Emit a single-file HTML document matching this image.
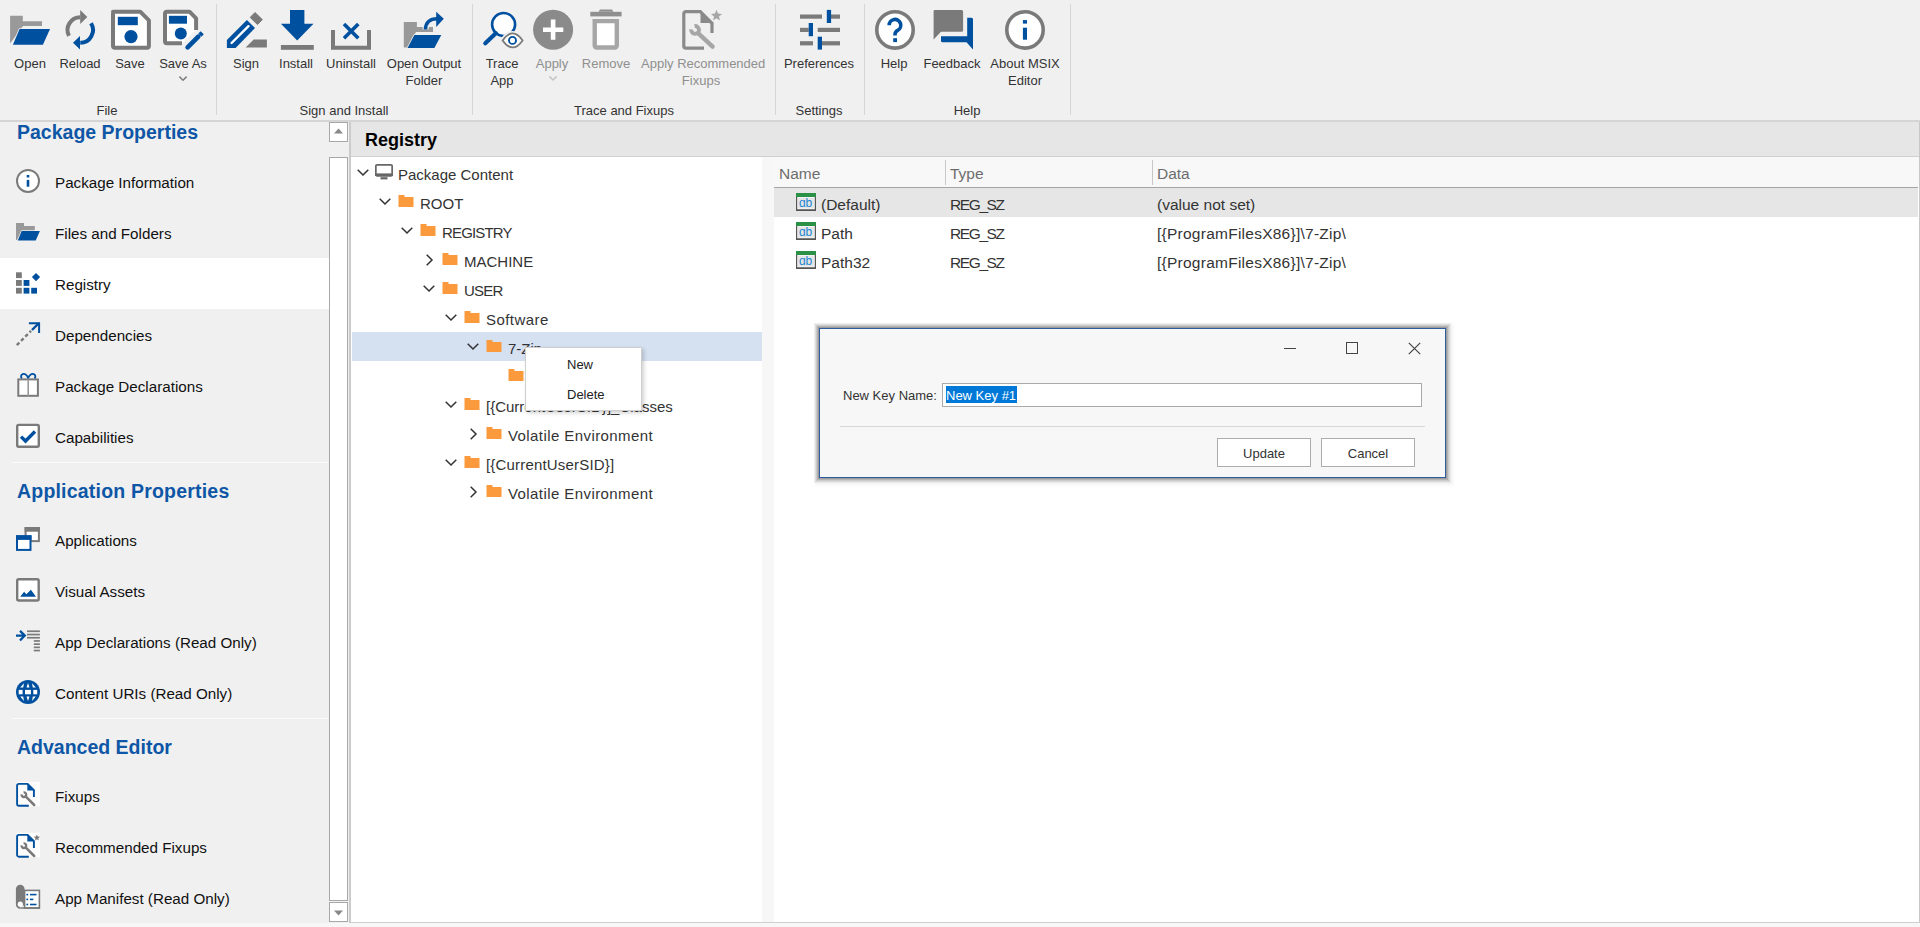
<!DOCTYPE html>
<html><head><meta charset="utf-8">
<style>
*{box-sizing:border-box;margin:0;padding:0}
html,body{width:1920px;height:927px;overflow:hidden;background:#f0f0f0;font-family:"Liberation Sans",sans-serif;color:#000}
.a{position:absolute}
.t{position:absolute;white-space:nowrap;line-height:1}
svg{position:absolute;overflow:visible}
/* ribbon */
#ribbon{left:0;top:0;width:1920px;height:120px;background:#f0f0f0}
.rl{font-size:13px;color:#333;text-align:center;width:120px;line-height:17px}
.gl{font-size:13px;color:#333;text-align:center;line-height:1;margin-top:1px}
.dis{color:#8f8f8f}
.gsep{width:1px;background:#d6d6d6;top:4px;height:111px}
/* sidebar */
.sh{font-size:19.5px;margin-top:1px;font-weight:700;color:#0e56a6}
.si{font-size:15.2px;color:#111}
/* tree */
.tr{font-size:15px;color:#333}
.lv{font-size:15.5px;color:#333}
</style></head><body>
<!-- ribbon -->
<div id="ribbon" class="a"></div>
<div class="a" style="left:0;top:120px;width:1920px;height:2px;background:#d5d5d5"></div>

<!-- group separators -->
<div class="a gsep" style="left:216px"></div>
<div class="a gsep" style="left:472px"></div>
<div class="a gsep" style="left:775px"></div>
<div class="a gsep" style="left:864px"></div>
<div class="a gsep" style="left:1070px"></div>

<!-- ribbon icons -->
<svg style="left:0;top:0" width="1100" height="60" viewBox="0 0 1100 60">
<!-- Open -->
<path d="M10.1 15.8H22.8V21.2H42V26H23L10.1 43.6Z" fill="#999"/>

<path d="M19.6 29H50L42.9 44.8H12.9Z" fill="#0050a0" stroke="#f0f0f0" stroke-width="1.6" paint-order="stroke"/>
<!-- Reload -->
<path d="M68.97 35.84A12.7 12.7 0 0 1 80.25 17.3" fill="none" stroke="#7a7a7a" stroke-width="4"/>
<path d="M80.2 10.1L87.3 17.1L80.2 24.1Z" fill="#7a7a7a"/>
<path d="M91.02 23.27A12.7 12.7 0 0 1 80.25 42.7" fill="none" stroke="#0050a0" stroke-width="4"/>
<path d="M80 36L73 42.8L80 49.5Z" fill="#0050a0"/>
<!-- Save -->
<path d="M113 11.7H140.2L148.9 20.3V45.8A2 2 0 0 1 146.9 47.8H115A2 2 0 0 1 113 45.8V13.7A2 2 0 0 1 115 11.7Z" fill="#fff" stroke="#7a7a7a" stroke-width="4" stroke-linejoin="round"/>
<rect x="117.8" y="16.8" width="20" height="8.4" fill="#0050a0"/>
<circle cx="131" cy="36.6" r="6.6" fill="#0050a0"/>
<!-- Save As -->
<path d="M182 43.3H167A2 2 0 0 1 165 41.3V13.7A2 2 0 0 1 167 11.7H189.5L196.1 18.3V30" fill="#fff" stroke="#7a7a7a" stroke-width="4" stroke-linejoin="round"/>
<rect x="168.9" y="15.8" width="18.1" height="7.9" fill="#0050a0"/>
<circle cx="180.8" cy="33.4" r="6" fill="#0050a0"/>
<path d="M184.5 50.5L203.5 31.5" stroke="#f0f0f0" stroke-width="9"/>
<path d="M187.6 47.4L198.3 36.7" stroke="#0050a0" stroke-width="4.6" stroke-linecap="round"/>
<path d="M198.3 36.7L198.5 36.5" stroke="#0050a0" stroke-width="4.6"/>
<path d="M199.9 35.1L202.2 32.8" stroke="#0050a0" stroke-width="4.4"/>
<!-- Save As chevron -->
<path d="M179.4 76.6L183 80.2L186.6 76.6" fill="none" stroke="#7f7f7f" stroke-width="1.5"/>
<!-- Sign -->
<path d="M226.9 40L246.9 20L255 28.1L235.6 48.1H226.9Z" fill="#0050a0"/>
<path d="M231.6 43L248.5 26.2" stroke="#fff" stroke-width="2.4" stroke-linecap="round"/>
<path d="M255 12.5L262.3 19.6L257.5 24.6L250.2 17.4Z" fill="#7a7a7a" stroke="#7a7a7a" stroke-width="1" stroke-linejoin="round"/>
<path d="M253.7 39.4H266.9V47.5H245.6Z" fill="#7a7a7a"/>
<!-- Install -->
<rect x="290" y="10" width="14.4" height="14" fill="#0050a0"/>
<path d="M280.9 23.7H313.5L297.2 40.6Z" fill="#0050a0"/>
<rect x="280.9" y="45" width="32.9" height="4.8" fill="#7a7a7a"/>
<!-- Uninstall -->
<path d="M333 30V47.8H369V30" fill="none" stroke="#7a7a7a" stroke-width="4"/>
<path d="M344 24L358.3 38.3M358.3 24L344 38.3" stroke="#0050a0" stroke-width="3.6"/>
<!-- Open Output Folder -->
<path d="M403.8 21.9H416.9V26.9H433V32H416L407.5 47.5H403.8Z" fill="#999"/>
<path d="M414.4 35H441.3L434.4 48.1H407.5Z" fill="#0050a0" stroke="#f0f0f0" stroke-width="1.6" paint-order="stroke"/>
<path d="M425.5 29.5C425.5 22.5 430 18.8 437 18.8" fill="none" stroke="#f0f0f0" stroke-width="6"/>
<path d="M425.5 29.5C425.5 22.5 430 18.8 437 18.8" fill="none" stroke="#0050a0" stroke-width="3.6"/>
<path d="M436.2 11.8L443.8 18.8L436.2 26.9Z" fill="#0050a0"/>
<!-- Trace App -->
<circle cx="503.6" cy="24.5" r="11.5" fill="#fff" stroke="#0050a0" stroke-width="2.6"/>
<path d="M495.8 33.2L485.3 43.3" stroke="#0050a0" stroke-width="4.2" stroke-linecap="round"/>
<path d="M502.6 40.4Q512.6 26.4 522.6 40.4Q512.6 54.4 502.6 40.4Z" fill="#fff" stroke="#f0f0f0" stroke-width="5"/>
<path d="M502.6 40.4Q512.6 26.4 522.6 40.4Q512.6 54.4 502.6 40.4Z" fill="#fff" stroke="#7a7a7a" stroke-width="1.8"/>
<circle cx="512.5" cy="40.4" r="3.5" fill="#fff" stroke="#0050a0" stroke-width="1.9"/>
<!-- Apply -->
<circle cx="553.1" cy="29.7" r="20" fill="#8a8a8a"/>
<path d="M543 29.7H563.3M553.1 19.5V39.8" stroke="#fff" stroke-width="4.6"/>
<path d="M549.4 76.4L553 80L556.6 76.4" fill="none" stroke="#c4c4c4" stroke-width="1.5"/>
<!-- Remove -->
<path d="M590.3 11.8H621.6V16.4H590.3Z" fill="#8f8f8f"/>
<path d="M600 9.6H612L613.5 11.8H598.5Z" fill="#8f8f8f"/>
<path d="M594.7 21.1H616.8V45.5A2 2 0 0 1 614.8 47.5H596.7A2 2 0 0 1 594.7 45.5Z" fill="#fff" stroke="#a6a6a6" stroke-width="4.4"/>
<!-- Apply Recommended Fixups -->
<path d="M704 48.2H686A2.2 2.2 0 0 1 683.8 46V13.8A2.2 2.2 0 0 1 686 11.6H700.3L712 23.3V33.1" fill="none" stroke="#8a8a8a" stroke-width="3.2"/>
<path d="M700.5 10.2V22.9H713.8Z" fill="#8a8a8a"/>
<path d="M694.56 26.04A3.9 3.9 0 1 1 691.24 29.36" fill="none" stroke="#a6a6a6" stroke-width="3.9"/><path d="M698.6 33.6L712.6 46.6" stroke="#a6a6a6" stroke-width="4.4" stroke-linecap="round"/>
<path d="M716.50 9.80L718.03 13.60L722.11 13.88L718.97 16.50L719.97 20.47L716.50 18.30L713.03 20.47L714.03 16.50L710.89 13.88L714.97 13.60Z" fill="#a6a6a6"/>
<!-- Preferences -->
<g fill="#7a7a7a">
<rect x="800" y="14.5" width="22" height="4.2"/><rect x="831" y="14.5" width="9" height="4.2"/>
<rect x="800" y="27.8" width="8.7" height="4.2"/><rect x="817.7" y="27.8" width="22.3" height="4.2"/>
<rect x="800" y="41.2" width="13" height="4.2"/><rect x="822" y="41.2" width="18" height="4.2"/>
</g>
<g fill="#0050a0">
<rect x="826.8" y="9.9" width="4.3" height="13.1"/>
<rect x="808.7" y="23" width="4.3" height="13.2"/>
<rect x="817.7" y="36.7" width="4.3" height="12.9"/>
</g>
<!-- Help -->
<circle cx="895" cy="29.9" r="18.2" fill="#fff" stroke="#7a7a7a" stroke-width="3.6"/>
<path d="M889.2 25.2A5.8 5.8 0 1 1 897.7 30.3C896 31.2 895 32.3 895 34.5V35.5" fill="none" stroke="#0050a0" stroke-width="3.6"/>
<rect x="893.2" y="38.2" width="3.8" height="3.9" fill="#0050a0"/>
<!-- Feedback -->
<path d="M934.4 9.9H961.6A1.5 1.5 0 0 1 963.1 11.4V30.3A1.5 1.5 0 0 1 961.6 31.8H941L933.6 39.4V11.4A1.5 1.5 0 0 1 934.4 9.9Z" fill="#7a7a7a"/>
<path d="M967.2 17.8H971.5A1.5 1.5 0 0 1 973 19.3V49.6L966.5 42.3H942.5A1.5 1.5 0 0 1 941 40.8V36.2H967.2Z" fill="#0050a0"/>
<!-- About -->
<circle cx="1025" cy="29.9" r="18.2" fill="#fff" stroke="#7a7a7a" stroke-width="3.6"/>
<rect x="1022.9" y="20.1" width="4.1" height="3.5" fill="#0050a0"/>
<rect x="1022.9" y="27.7" width="4.1" height="12" fill="#0050a0"/>
</svg>

<!-- ribbon labels -->
<div class="t rl" style="left:-30px;top:55px">Open</div>
<div class="t rl" style="left:20px;top:55px">Reload</div>
<div class="t rl" style="left:70px;top:55px">Save</div>
<div class="t rl" style="left:123px;top:55px">Save As</div>
<div class="t rl" style="left:186px;top:55px">Sign</div>
<div class="t rl" style="left:236px;top:55px">Install</div>
<div class="t rl" style="left:291px;top:55px">Uninstall</div>
<div class="t rl" style="left:364px;top:55px">Open Output<br>Folder</div>
<div class="t rl" style="left:442px;top:55px">Trace<br>App</div>
<div class="t rl dis" style="left:492px;top:55px">Apply</div>
<div class="t rl dis" style="left:546px;top:55px">Remove</div>
<div class="t rl dis" style="left:641px;top:55px;width:120px">Apply Recommended<br>Fixups</div>
<div class="t rl" style="left:759px;top:55px">Preferences</div>
<div class="t rl" style="left:834px;top:55px">Help</div>
<div class="t rl" style="left:892px;top:55px">Feedback</div>
<div class="t rl" style="left:965px;top:55px">About MSIX<br>Editor</div>

<div class="t gl" style="left:47px;top:103px;width:120px">File</div>
<div class="t gl" style="left:284px;top:103px;width:120px">Sign and Install</div>
<div class="t gl" style="left:564px;top:103px;width:120px">Trace and Fixups</div>
<div class="t gl" style="left:759px;top:103px;width:120px">Settings</div>
<div class="t gl" style="left:907px;top:103px;width:120px">Help</div>

<!-- sidebar -->
<div class="a" style="left:0;top:122px;width:329px;height:801px;background:#f0f0f0"></div>
<div class="a" style="left:0;top:258px;width:329px;height:51px;background:#fff"></div>
<div class="a" style="left:12px;top:462px;width:316px;height:1px;background:#fbfbfb"></div>
<div class="a" style="left:12px;top:718px;width:316px;height:1px;background:#fbfbfb"></div>

<div class="t sh" style="left:17px;top:122px">Package Properties</div>
<div class="t si" style="left:55px;top:175px">Package Information</div>
<div class="t si" style="left:55px;top:226px">Files and Folders</div>
<div class="t si" style="left:55px;top:277px">Registry</div>
<div class="t si" style="left:55px;top:328px">Dependencies</div>
<div class="t si" style="left:55px;top:379px">Package Declarations</div>
<div class="t si" style="left:55px;top:430px">Capabilities</div>
<div class="t sh" style="left:17px;top:481px;letter-spacing:0.2px">Application Properties</div>
<div class="t si" style="left:55px;top:533px">Applications</div>
<div class="t si" style="left:55px;top:584px">Visual Assets</div>
<div class="t si" style="left:55px;top:635px">App Declarations (Read Only)</div>
<div class="t si" style="left:55px;top:686px">Content URIs (Read Only)</div>
<div class="t sh" style="left:17px;top:737px">Advanced Editor</div>
<div class="t si" style="left:55px;top:789px">Fixups</div>
<div class="t si" style="left:55px;top:840px">Recommended Fixups</div>
<div class="t si" style="left:55px;top:891px">App Manifest (Read Only)</div>

<svg style="left:0;top:0" width="50" height="927" viewBox="0 0 50 927">
<!-- Package Information -->
<circle cx="28" cy="180.9" r="11" fill="#fff" stroke="#7a7a7a" stroke-width="2"/>
<rect x="26.7" y="175" width="2.6" height="2.5" fill="#0050a0"/>
<rect x="26.7" y="179.9" width="2.6" height="6.8" fill="#0050a0"/>
<!-- Files and Folders -->
<path d="M16 223.1H24V226H34.8V231H21.5L17 240H16Z" fill="#999"/>
<path d="M21.65 230.9H39.9L35.7 240.6H17.8Z" fill="#0050a0" stroke="#f0f0f0" stroke-width="1.2" paint-order="stroke"/>
<!-- Registry -->
<g fill="#7a7a7a"><rect x="16" y="272.3" width="5.8" height="5.8"/><rect x="16" y="280" width="5.8" height="5.9"/><rect x="16" y="287.8" width="5.8" height="5.8"/></g>
<g fill="#0050a0"><rect x="23.6" y="280" width="5.8" height="5.9"/><rect x="23.6" y="287.8" width="5.8" height="5.8"/><rect x="31.2" y="287.8" width="5.8" height="5.8"/>
<path d="M36 273L40.1 277.1L36 281.2L31.9 277.1Z"/></g>
<!-- Dependencies -->
<path d="M16.8 345.1L31 330.9" stroke="#7a7a7a" stroke-width="2.4" stroke-dasharray="3.6 2.4"/>
<path d="M32 330L39 323" stroke="#0050a0" stroke-width="2.4"/>
<path d="M28.9 323.2H39.1V333" fill="none" stroke="#0050a0" stroke-width="2"/>
<!-- Package Declarations -->
<rect x="18.3" y="379.4" width="19.6" height="16.4" fill="#fff" stroke="#7a7a7a" stroke-width="2"/>
<rect x="27.4" y="379.4" width="1.6" height="16.4" fill="#9a9a9a"/>
<path d="M28.2 378.3C27 374.5 24.5 373.5 22.7 374.1C20.7 374.8 20.5 377.2 22 378.3M28.2 378.3C29.4 374.5 31.9 373.5 33.7 374.1C35.7 374.8 35.9 377.2 34.4 378.3" fill="none" stroke="#0050a0" stroke-width="1.8"/>
<!-- Capabilities -->
<rect x="17.2" y="424.9" width="21.6" height="21.9" rx="1.5" fill="#fff" stroke="#7a7a7a" stroke-width="2.4"/>
<path d="M21 436.6L25.5 441L35 431.5" fill="none" stroke="#0050a0" stroke-width="3.4"/>
<!-- Applications -->
<rect x="25.6" y="528" width="13.3" height="13.1" fill="#fff" stroke="#7a7a7a" stroke-width="2"/>
<rect x="24.6" y="527" width="15.3" height="4.7" fill="#7a7a7a"/>
<rect x="17" y="536.3" width="13.5" height="13.6" fill="#fff" stroke="#0050a0" stroke-width="2"/>
<rect x="16" y="535.3" width="15.5" height="4.6" fill="#0050a0"/>
<!-- Visual Assets -->
<rect x="17.2" y="579.2" width="21.5" height="21.3" rx="1.5" fill="#fff" stroke="#7a7a7a" stroke-width="2.4"/>
<path d="M20.2 596.7L24.1 591.8L26.3 594.3L30.9 589.7L36 596.7Z" fill="#0050a0"/>
<!-- App Declarations -->
<path d="M16 635.6H25M20 630.9L24.8 635.6L20 640.5" fill="none" stroke="#0050a0" stroke-width="2.3"/>
<g fill="#7a7a7a"><rect x="27" y="630.4" width="12.9" height="1.7"/><rect x="27" y="633.7" width="12.9" height="1.7"/><rect x="27" y="636.9" width="12.9" height="1.7"/>
<rect x="33.8" y="640.1" width="6.1" height="1.7"/><rect x="33.8" y="643.3" width="6.1" height="1.7"/><rect x="33.8" y="646.5" width="6.1" height="1.7"/><rect x="33.8" y="649.7" width="6.1" height="1.7"/></g>
<!-- Content URIs -->
<circle cx="28" cy="691.9" r="12" fill="#0050a0"/>
<g fill="#fff">
<rect x="18.7" y="689.9" width="3.9" height="4.4"/><rect x="25" y="689.9" width="5.9" height="4.4"/><rect x="33.3" y="689.9" width="3.9" height="4.4"/>
<path d="M20.2 687.6L24 683.2L23.2 687.6Z"/><path d="M26.5 687.6L28 683L29.5 687.6Z"/><path d="M35.8 687.6L32 683.2L32.8 687.6Z"/>
<path d="M20.2 696.6L24 701L23.2 696.6Z"/><path d="M26.5 696.6L28 701L29.5 696.6Z"/><path d="M35.8 696.6L32 701L32.8 696.6Z"/>
</g>
<!-- Fixups -->
<rect x="16.5" y="781.8" width="23.5" height="24.5" fill="#fdfdfd"/>
<path d="M28.8 805.7H18.9A1.8 1.8 0 0 1 17.1 803.9V785.7A1.8 1.8 0 0 1 18.9 783.9H27.6L33.9 790.2V796.9" fill="none" stroke="#0050a0" stroke-width="1.9"/>
<path d="M27.3 783V790.6H34.8Z" fill="#0050a0"/>
<path d="M23.58 792.42A2.3 2.3 0 1 1 21.62 794.38" fill="none" stroke="#7a7a7a" stroke-width="2.3"/><path d="M25.6 796.4L34.2 805" stroke="#7a7a7a" stroke-width="2.5" stroke-linecap="round"/>
<!-- Recommended Fixups -->
<rect x="16.5" y="832.8" width="23.5" height="24.5" fill="#fdfdfd"/>
<path d="M28.8 856.7H18.9A1.8 1.8 0 0 1 17.1 854.9V836.7A1.8 1.8 0 0 1 18.9 834.9H27.6L33.9 841.2V847.9" fill="none" stroke="#0050a0" stroke-width="1.9"/>
<path d="M27.3 834V841.6H34.8Z" fill="#0050a0"/>
<path d="M23.58 843.42A2.3 2.3 0 1 1 21.62 845.38" fill="none" stroke="#7a7a7a" stroke-width="2.3"/><path d="M25.6 847.4L34.2 856" stroke="#7a7a7a" stroke-width="2.5" stroke-linecap="round"/>
<path d="M36.90 834.40L37.78 836.59L40.13 836.75L38.33 838.26L38.90 840.55L36.90 839.30L34.90 840.55L35.47 838.26L33.67 836.75L36.02 836.59Z" fill="#7a7a7a"/>
<!-- App Manifest -->
<rect x="24.6" y="890.4" width="14.8" height="17.6" fill="#fff" stroke="#7a7a7a" stroke-width="1.6"/>
<path d="M15.9 889A4.35 4.35 0 0 1 24.6 889V905L22 906H20.2A4.3 4.3 0 0 0 20.2 908.8H24.6V908.8H20.2A4.3 4.3 0 0 1 15.9 904.5Z" fill="#7a7a7a"/>
<path d="M20.2 908.8A4.3 4.3 0 0 1 15.9 904.5L15.9 904.5A4.3 4.3 0 0 0 20.2 908.8H40V907.2H20.2Z" fill="#7a7a7a"/>
<circle cx="20.3" cy="904.2" r="2.6" fill="#fff"/>
<g fill="#0050a0"><rect x="26.4" y="893.8" width="1.8" height="1.6"/><rect x="26.4" y="898.6" width="1.8" height="1.6"/><rect x="26.4" y="903.7" width="1.8" height="1.6"/>
<rect x="30" y="893.8" width="6.5" height="1.6"/><rect x="30" y="898.6" width="3.3" height="1.6"/><rect x="30" y="903.7" width="6.5" height="1.6"/></g>
</svg>

<!-- scrollbar -->
<div class="a" style="left:329px;top:122px;width:19px;height:20px;background:#fff;border:1px solid #a8a8a8"></div>
<div class="a" style="left:329px;top:157px;width:19px;height:744px;background:#fff;border:1px solid #a8a8a8"></div>
<div class="a" style="left:329px;top:902px;width:19px;height:20px;background:#fff;border:1px solid #a8a8a8"></div>
<svg style="left:334px;top:128px" width="9" height="6"><path d="M0 5.5L4.5 0.5L9 5.5Z" fill="#888"/></svg>
<svg style="left:334px;top:910px" width="9" height="6"><path d="M0 0.5L4.5 5.5L9 0.5Z" fill="#888"/></svg>
<div class="a" style="left:349px;top:122px;width:2px;height:801px;background:#cbcbcb"></div>

<!-- registry header -->
<div class="a" style="left:351px;top:122px;width:1569px;height:35px;background:#e6e6e6"></div>
<div class="a" style="left:351px;top:156px;width:1569px;height:1px;background:#d0d0d0"></div>
<div class="t" style="left:365px;top:131px;font-size:18px;font-weight:700;color:#000">Registry</div>

<!-- tree -->
<div class="a" style="left:351px;top:157px;width:411px;height:765px;background:#fff"></div>
<div class="a" style="left:352px;top:332px;width:410px;height:29px;background:#d5e0f1"></div>

<!-- treeitems -->
<svg style="left:357px;top:169px" width="12" height="7"><path d="M0.7 0.7L6 6L11.3 0.7" fill="none" stroke="#333" stroke-width="1.5"/></svg>
<svg style="left:375px;top:164px" width="18" height="15"><rect x="0.85" y="0.85" width="16.3" height="11" rx="1.2" fill="none" stroke="#666" stroke-width="1.7"/><rect x="0" y="9.4" width="18" height="2.6" fill="#666"/><rect x="5.5" y="13.2" width="7" height="2.2" fill="#666"/></svg>
<div class="t tr" style="left:398px;top:167px">Package Content</div>
<svg style="left:379px;top:198px" width="12" height="7"><path d="M0.7 0.7L6 6L11.3 0.7" fill="none" stroke="#333" stroke-width="1.5"/></svg>
<svg style="left:398px;top:195px" width="16" height="13"><path d="M0.5 0H6.5V2H15.5V12H0.5Z" fill="#fa9a3d"/></svg>
<div class="t tr" style="left:420px;top:196px">ROOT</div>
<svg style="left:401px;top:227px" width="12" height="7"><path d="M0.7 0.7L6 6L11.3 0.7" fill="none" stroke="#333" stroke-width="1.5"/></svg>
<svg style="left:420px;top:224px" width="16" height="13"><path d="M0.5 0H6.5V2H15.5V12H0.5Z" fill="#fa9a3d"/></svg>
<div class="t tr" style="left:442px;top:225px;letter-spacing:-0.85px">REGISTRY</div>
<svg style="left:426px;top:254px" width="7" height="12"><path d="M0.7 0.7L6 6L0.7 11.3" fill="none" stroke="#333" stroke-width="1.5"/></svg>
<svg style="left:442px;top:253px" width="16" height="13"><path d="M0.5 0H6.5V2H15.5V12H0.5Z" fill="#fa9a3d"/></svg>
<div class="t tr" style="left:464px;top:254px">MACHINE</div>
<svg style="left:423px;top:285px" width="12" height="7"><path d="M0.7 0.7L6 6L11.3 0.7" fill="none" stroke="#333" stroke-width="1.5"/></svg>
<svg style="left:442px;top:282px" width="16" height="13"><path d="M0.5 0H6.5V2H15.5V12H0.5Z" fill="#fa9a3d"/></svg>
<div class="t tr" style="left:464px;top:283px;letter-spacing:-0.8px">USER</div>
<svg style="left:445px;top:314px" width="12" height="7"><path d="M0.7 0.7L6 6L11.3 0.7" fill="none" stroke="#333" stroke-width="1.5"/></svg>
<svg style="left:464px;top:311px" width="16" height="13"><path d="M0.5 0H6.5V2H15.5V12H0.5Z" fill="#fa9a3d"/></svg>
<div class="t tr" style="left:486px;top:312px;letter-spacing:0.45px">Software</div>
<svg style="left:467px;top:343px" width="12" height="7"><path d="M0.7 0.7L6 6L11.3 0.7" fill="none" stroke="#333" stroke-width="1.5"/></svg>
<svg style="left:486px;top:340px" width="16" height="13"><path d="M0.5 0H6.5V2H15.5V12H0.5Z" fill="#fa9a3d"/></svg>
<div class="t tr" style="left:508px;top:341px">7-Zip</div>
<svg style="left:508px;top:369px" width="16" height="13"><path d="M0.5 0H6.5V2H15.5V12H0.5Z" fill="#fa9a3d"/></svg>
<svg style="left:445px;top:401px" width="12" height="7"><path d="M0.7 0.7L6 6L11.3 0.7" fill="none" stroke="#333" stroke-width="1.5"/></svg>
<svg style="left:464px;top:398px" width="16" height="13"><path d="M0.5 0H6.5V2H15.5V12H0.5Z" fill="#fa9a3d"/></svg>
<div class="t tr" style="left:486px;top:399px">[{CurrentUserSID}]_Classes</div>
<svg style="left:470px;top:428px" width="7" height="12"><path d="M0.7 0.7L6 6L0.7 11.3" fill="none" stroke="#333" stroke-width="1.5"/></svg>
<svg style="left:486px;top:427px" width="16" height="13"><path d="M0.5 0H6.5V2H15.5V12H0.5Z" fill="#fa9a3d"/></svg>
<div class="t tr" style="left:508px;top:428px;letter-spacing:0.42px">Volatile Environment</div>
<svg style="left:445px;top:459px" width="12" height="7"><path d="M0.7 0.7L6 6L11.3 0.7" fill="none" stroke="#333" stroke-width="1.5"/></svg>
<svg style="left:464px;top:456px" width="16" height="13"><path d="M0.5 0H6.5V2H15.5V12H0.5Z" fill="#fa9a3d"/></svg>
<div class="t tr" style="left:486px;top:457px;letter-spacing:0.18px">[{CurrentUserSID}]</div>
<svg style="left:470px;top:486px" width="7" height="12"><path d="M0.7 0.7L6 6L0.7 11.3" fill="none" stroke="#333" stroke-width="1.5"/></svg>
<svg style="left:486px;top:485px" width="16" height="13"><path d="M0.5 0H6.5V2H15.5V12H0.5Z" fill="#fa9a3d"/></svg>
<div class="t tr" style="left:508px;top:486px;letter-spacing:0.42px">Volatile Environment</div>
<!-- /treeitems -->
<!-- list -->
<div class="a" style="left:762px;top:157px;width:12px;height:765px;background:#f7f7f7"></div>
<div class="a" style="left:774px;top:157px;width:1145px;height:31px;background:#f8f8f8"></div>
<div class="a" style="left:774px;top:188px;width:1145px;height:734px;background:#fff"></div>
<div class="a" style="left:774px;top:187px;width:1144px;height:1px;background:#a5a5a5"></div>
<div class="a" style="left:774px;top:188px;width:1144px;height:29px;background:#e6e6e6"></div>
<div class="a" style="left:945px;top:160px;width:1px;height:25px;background:#c8c8c8"></div>
<div class="a" style="left:1152px;top:160px;width:1px;height:25px;background:#c8c8c8"></div>
<div class="a" style="left:1919px;top:122px;width:1px;height:801px;background:#c8c8c8"></div>
<div class="a" style="left:351px;top:922px;width:1569px;height:1px;background:#cfcfcf"></div>
<div class="a" style="left:0;top:923px;width:1920px;height:4px;background:#f7f7f7"></div>

<div class="t lv" style="left:779px;top:166px;color:#6d6d6d">Name</div>
<div class="t lv" style="left:950px;top:166px;color:#6d6d6d">Type</div>
<div class="t lv" style="left:1157px;top:166px;color:#6d6d6d">Data</div>

<svg style="left:790px;top:185px" width="40" height="90" viewBox="790 185 40 90">
<g>
<rect x="796" y="193" width="20" height="18" fill="#555"/>
<rect x="797.2" y="197" width="17.6" height="12" fill="#f6f6f6"/>
<rect x="798" y="197.8" width="16" height="10.6" fill="#e6e6e6"/>
<rect x="797.2" y="209" width="17.6" height="0.8" fill="#888"/>
<rect x="796" y="193" width="20" height="4" fill="#2b9146"/>
<text x="805.4" y="207" font-family="Liberation Sans" font-size="12" font-weight="400" fill="#1f86d4" text-anchor="middle" letter-spacing="-0.4">&#x251;b</text>
</g>
<g transform="translate(0,29)">
<rect x="796" y="193" width="20" height="18" fill="#555"/>
<rect x="797.2" y="197" width="17.6" height="12" fill="#f6f6f6"/>
<rect x="798" y="197.8" width="16" height="10.6" fill="#e6e6e6"/>
<rect x="797.2" y="209" width="17.6" height="0.8" fill="#888"/>
<rect x="796" y="193" width="20" height="4" fill="#2b9146"/>
<text x="805.4" y="207" font-family="Liberation Sans" font-size="12" font-weight="400" fill="#1f86d4" text-anchor="middle" letter-spacing="-0.4">&#x251;b</text>
</g>
<g transform="translate(0,58)">
<rect x="796" y="193" width="20" height="18" fill="#555"/>
<rect x="797.2" y="197" width="17.6" height="12" fill="#f6f6f6"/>
<rect x="798" y="197.8" width="16" height="10.6" fill="#e6e6e6"/>
<rect x="797.2" y="209" width="17.6" height="0.8" fill="#888"/>
<rect x="796" y="193" width="20" height="4" fill="#2b9146"/>
<text x="805.4" y="207" font-family="Liberation Sans" font-size="12" font-weight="400" fill="#1f86d4" text-anchor="middle" letter-spacing="-0.4">&#x251;b</text>
</g>
</svg>

<div class="t lv" style="left:821px;top:197px">(Default)</div>
<div class="t lv" style="left:950px;top:196.5px;letter-spacing:-1.4px">REG_SZ</div>
<div class="t lv" style="left:1157px;top:197px">(value not set)</div>
<div class="t lv" style="left:821px;top:226px">Path</div>
<div class="t lv" style="left:950px;top:225.5px;letter-spacing:-1.4px">REG_SZ</div>
<div class="t lv" style="left:1157px;top:226px;letter-spacing:0.25px">[{ProgramFilesX86}]\7-Zip\</div>
<div class="t lv" style="left:821px;top:255px">Path32</div>
<div class="t lv" style="left:950px;top:254.5px;letter-spacing:-1.4px">REG_SZ</div>
<div class="t lv" style="left:1157px;top:255px;letter-spacing:0.25px">[{ProgramFilesX86}]\7-Zip\</div>


<!-- context menu -->
<div class="a" style="left:525px;top:347px;width:117px;height:64px;background:#fff;border:1px solid #cfcfcf;box-shadow:2px 2px 4px rgba(0,0,0,0.18)"></div>
<div class="t" style="left:567px;top:358px;font-size:13px;color:#222">New</div>
<div class="t" style="left:567px;top:388px;font-size:13px;color:#222">Delete</div>

<!-- dialog -->
<div class="a" style="left:819px;top:328px;width:627px;height:150px;background:#f7f7f7;border:1px solid #2f5b9f;box-shadow:0 0 0 1px rgba(0,0,0,0.125),0 0 0 2px rgba(0,0,0,0.11),0 0 0 3px rgba(0,0,0,0.08),0 0 0 4px rgba(0,0,0,0.054),0 0 1px 5px rgba(0,0,0,0.06),2px 2px 2px 6px rgba(0,0,0,0.03)"></div>
<div class="a" style="left:1284px;top:348px;width:12px;height:1px;background:#444"></div>
<div class="a" style="left:1346px;top:342px;width:12px;height:12px;border:1px solid #444"></div>
<svg style="left:1408px;top:342px" width="13" height="13"><path d="M0.8 0.8L12.2 12.2M12.2 0.8L0.8 12.2" stroke="#444" stroke-width="1.2"/></svg>
<div class="t" style="left:843px;top:389px;font-size:13px;color:#333">New Key Name:</div>
<div class="a" style="left:942px;top:383px;width:480px;height:24px;background:#fff;border:1px solid #a9a9a9"></div>
<div class="a" style="left:946px;top:386px;width:71px;height:17px;background:#0078d7"></div>
<div class="t" style="left:946px;top:389px;font-size:13px;color:#fff">New Key #1</div>
<div class="a" style="left:840px;top:426px;width:585px;height:1px;background:#d6d6d6"></div>
<div class="a" style="left:1217px;top:438px;width:94px;height:29px;background:#fff;border:1px solid #adadad"></div>
<div class="a" style="left:1321px;top:438px;width:94px;height:29px;background:#fff;border:1px solid #adadad"></div>
<div class="t" style="left:1217px;top:447px;width:94px;text-align:center;font-size:13px;color:#333">Update</div>
<div class="t" style="left:1321px;top:447px;width:94px;text-align:center;font-size:13px;color:#333">Cancel</div>
</body></html>
